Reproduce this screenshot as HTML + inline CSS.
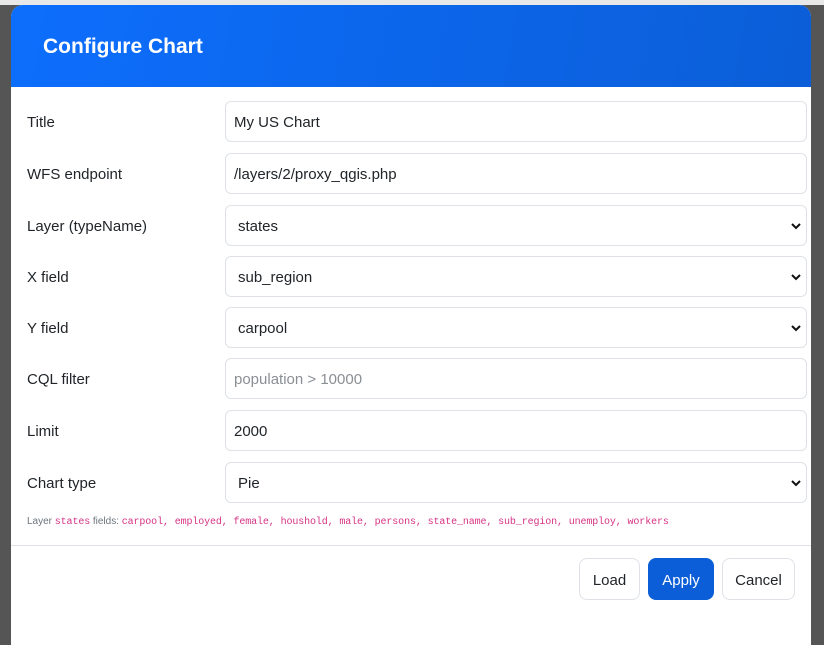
<!DOCTYPE html>
<html><head><style>
body{margin:0;width:824px;height:630px;overflow:hidden;background:#555;font-family:"Liberation Sans",sans-serif;position:relative}
.top{position:absolute;left:0;top:0;width:824px;height:5px;background:#e8e8e8}
.m{position:absolute;left:11px;top:5px;width:800px;height:640px;background:#fff;border-radius:12px 12px 0 0;overflow:hidden}
.h{height:82px;background:linear-gradient(100deg,#0d6efd,#0b5ed7);color:#fff;font-weight:bold;font-size:21px;line-height:84px;padding-left:32px}
.r{position:absolute;left:0;width:800px;height:41px}
.r label{position:absolute;left:16px;top:1px;line-height:41px;font-size:15px;color:#212529}
.r .i{position:absolute;left:214px;width:582px;height:41px;border:1px solid #dee2e6;border-radius:6px;font-size:15px;line-height:41px;padding-left:8px;box-sizing:border-box;color:#212529}
.r .s{padding-left:12px}
.chev{position:absolute;right:4px;top:15px}
.note{position:absolute;left:16px;top:516px;font-size:10px;color:#6c757d}
.note code{font-family:"Liberation Mono",monospace;color:#d63384;font-size:10px;letter-spacing:-0.12px}
.hr{position:absolute;left:0;top:545px;width:800px;border-top:1px solid #dee2e6}
.b{position:absolute;top:558px;height:42px;border:1px solid #dee2e6;border-radius:8px;font-size:15px;line-height:44px;text-align:center;color:#212529;box-sizing:border-box}
</style></head><body>
<div class="top"></div>
<div class="m">
<div class="h">Configure Chart</div>
</div>
<div style="position:absolute;left:11px;top:0;width:800px;height:630px">
<div class="r" style="top:101px"><label>Title</label><div class="i">My US Chart</div></div>
<div class="r" style="top:153px"><label>WFS endpoint</label><div class="i">/layers/2/proxy_qgis.php</div></div>
<div class="r" style="top:205px"><label>Layer (typeName)</label><div class="i s">states<svg class="chev" width="12" height="10" viewBox="0 0 12 10"><path d="M2 3l4 4 4-4" stroke="#111" stroke-width="2" fill="none"/></svg></div></div>
<div class="r" style="top:256px"><label>X field</label><div class="i s">sub_region<svg class="chev" width="12" height="10" viewBox="0 0 12 10"><path d="M2 3l4 4 4-4" stroke="#111" stroke-width="2" fill="none"/></svg></div></div>
<div class="r" style="top:307px"><label>Y field</label><div class="i s">carpool<svg class="chev" width="12" height="10" viewBox="0 0 12 10"><path d="M2 3l4 4 4-4" stroke="#111" stroke-width="2" fill="none"/></svg></div></div>
<div class="r" style="top:358px"><label>CQL filter</label><div class="i" style="color:#8a8f94">population &gt; 10000</div></div>
<div class="r" style="top:410px"><label>Limit</label><div class="i">2000</div></div>
<div class="r" style="top:462px"><label>Chart type</label><div class="i s">Pie<svg class="chev" width="12" height="10" viewBox="0 0 12 10"><path d="M2 3l4 4 4-4" stroke="#111" stroke-width="2" fill="none"/></svg></div></div>
<div class="note">Layer <code>states</code> fields: <code>carpool, employed, female, houshold, male, persons, state_name, sub_region, unemploy, workers</code></div>
<div class="hr"></div>
<div class="b" style="left:568px;width:61px;background:#fff">Load</div>
<div class="b" style="left:637px;width:66px;background:#0b5ed7;border-color:#0b5ed7;color:#fff">Apply</div>
<div class="b" style="left:711px;width:73px;background:#fff">Cancel</div>
</div>
</body></html>
